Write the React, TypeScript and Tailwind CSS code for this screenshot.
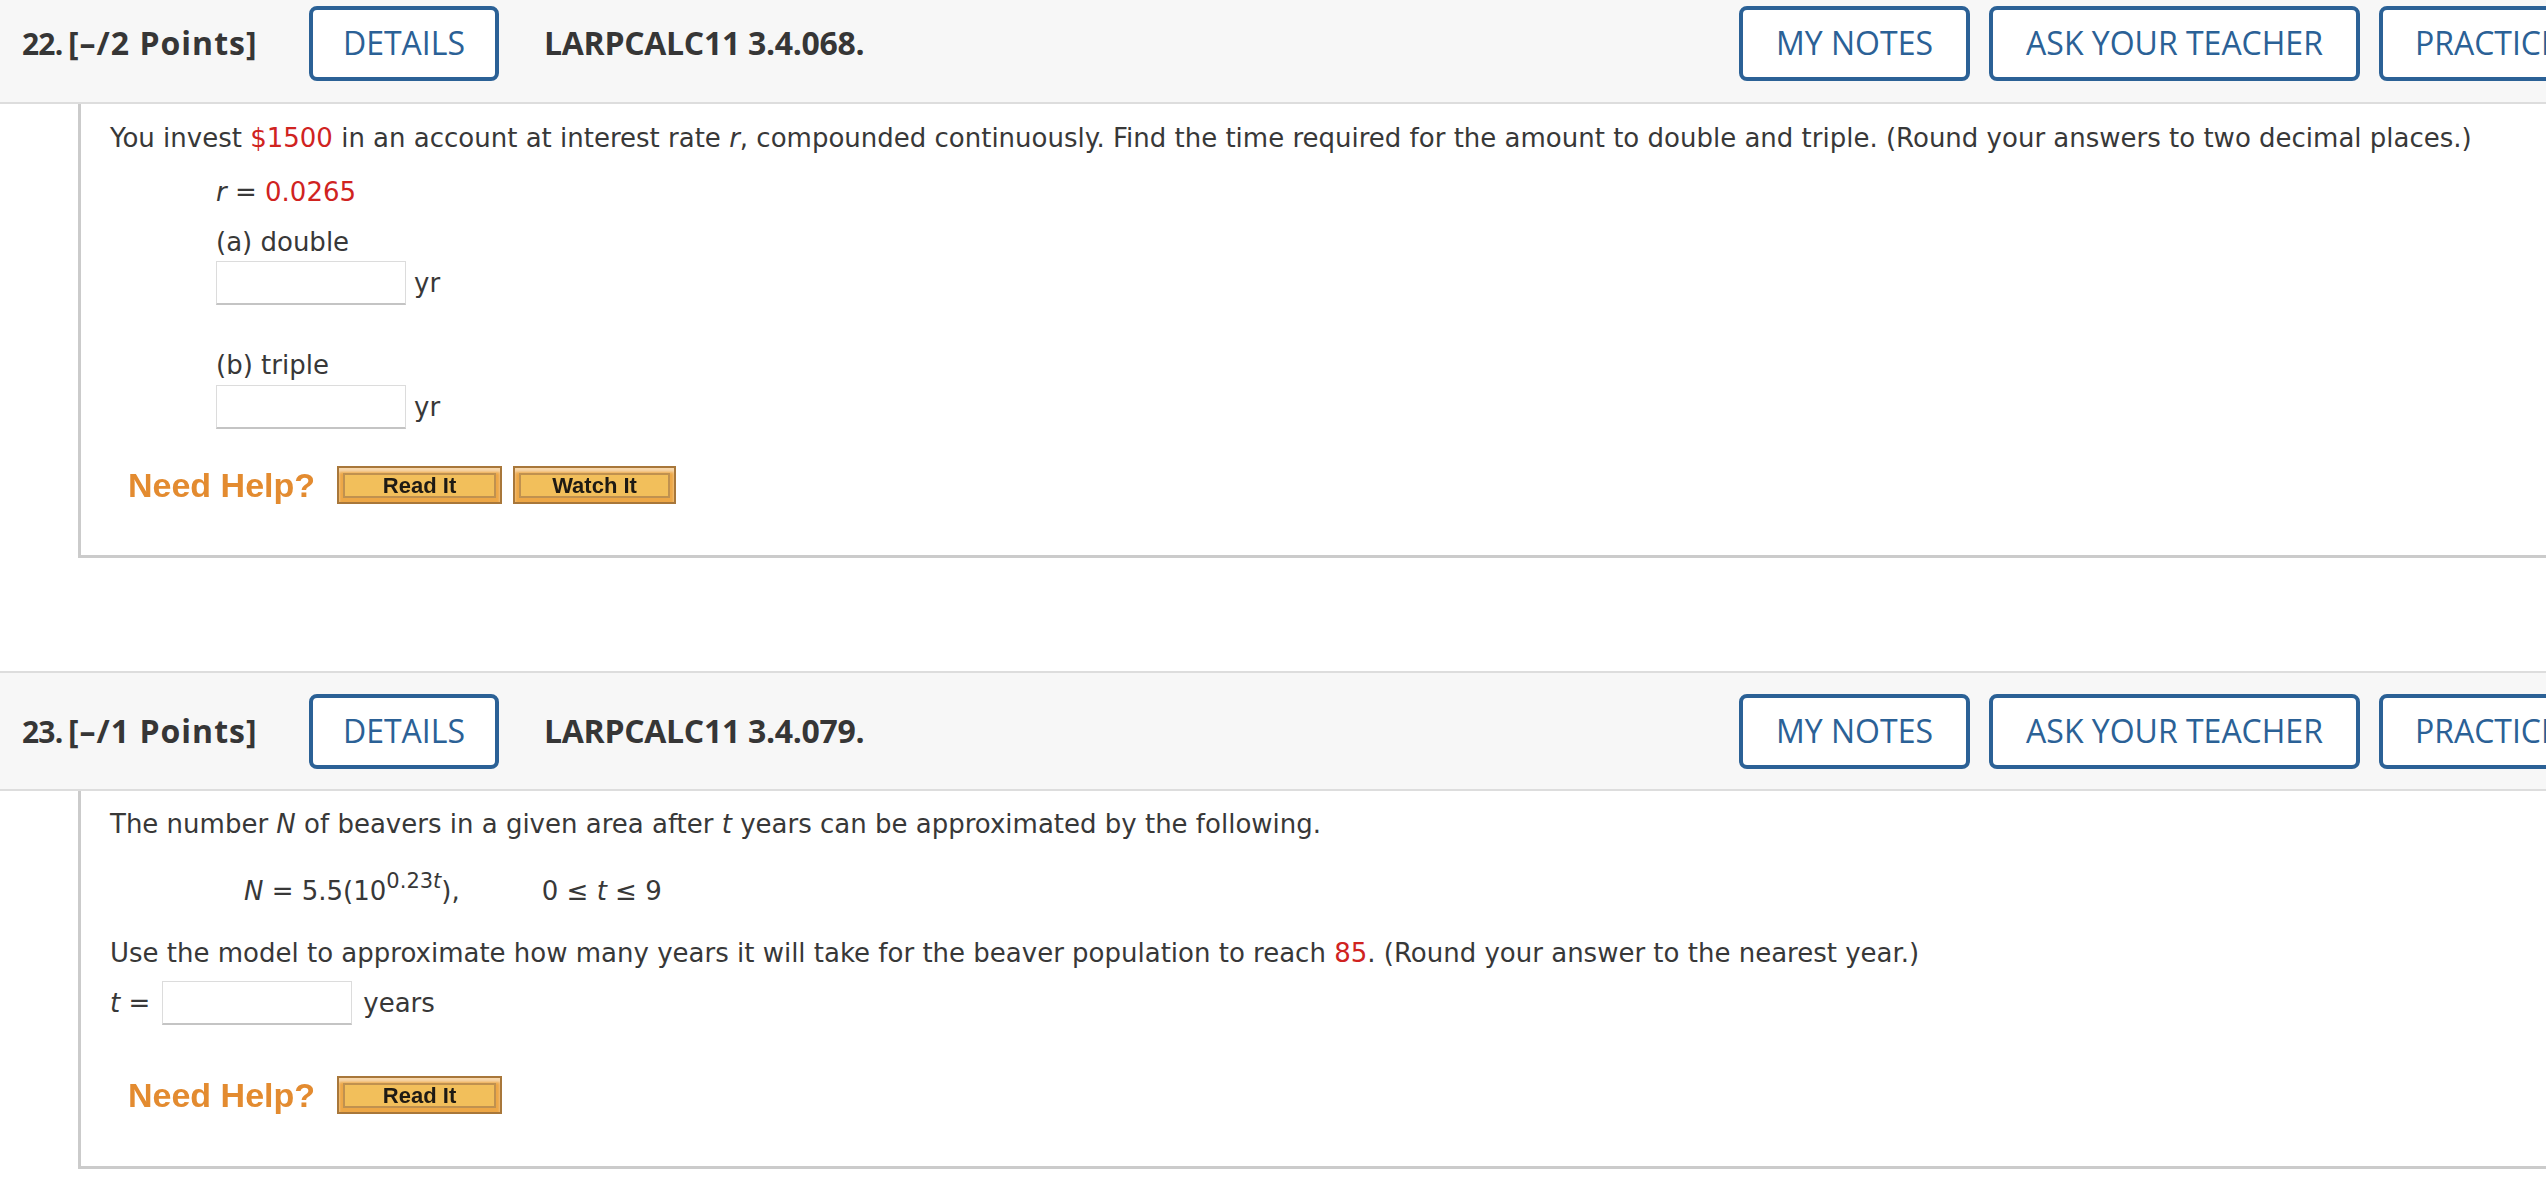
import React from "react";

const body = { fontFamily: '"DejaVu Sans", Verdana, sans-serif' };

function HeaderBtn({ label, w }: { label: string; w: string }) {
  return (
    <div
      className={`${w} h-[75px] shrink-0 border-[4px] border-[#2b6196] rounded-[8px] bg-white flex items-center justify-center text-[#2b6196] text-[32px] whitespace-nowrap overflow-hidden`}
    >
      {label}
    </div>
  );
}

function Header({ num, pts, code, top }: { num: string; pts: string; code: string; top?: boolean }) {
  return (
    <div
      className={`h-[120px] bg-[#f7f7f7] border-b-2 border-[#dddddd] ${top ? "" : "border-t-2"} flex items-center whitespace-nowrap text-[#363636]`}
      style={{ fontFamily: '"Open Sans", sans-serif' }}
    >
      <div className="w-[1739px] shrink-0 flex items-center">
        <span className="ml-[22px] w-[46px] font-bold text-[30px] tracking-[-0.8px]">{num}</span>
        <span className="w-[241px] font-bold text-[32px] tracking-[1px]">{pts}</span>
        <HeaderBtn label="DETAILS" w="w-[190px]" />
        <span className="ml-[45px] font-bold text-[32px] tracking-[-0.3px]">{code}</span>
      </div>
      <div className="flex gap-[19px]">
        <HeaderBtn label="MY NOTES" w="w-[231px]" />
        <HeaderBtn label="ASK YOUR TEACHER" w="w-[371px]" />
        <HeaderBtn label="PRACTICE ANOTHER" w="w-[372px]" />
      </div>
    </div>
  );
}

function HelpBtn({ label, w }: { label: string; w: string }) {
  return (
    <div className={`${w} h-[38px] border-2 border-[#a8773a] bg-[#eda746] p-[4px] pt-[5px] shadow-[inset_0_4px_3px_rgba(255,255,255,0.55)]`}>
      <div
        className="h-full border-2 border-[#c0914f] bg-[#f2bf5b] flex items-center justify-center text-[22px] font-bold text-[#1e1a14] blur-[0.5px]"
        style={{ fontFamily: '"Liberation Sans", Arial, sans-serif' }}
      >
        {label}
      </div>
    </div>
  );
}

function NeedHelp({ children }: { children: React.ReactNode }) {
  return (
    <div className="flex items-center ml-[47px]">
      <span
        className="text-[34px] font-bold text-[#e38b30] mr-[22px] blur-[0.6px]"
        style={{ fontFamily: '"Liberation Sans", Arial, sans-serif' }}
      >
        Need Help?
      </span>
      <div className="flex gap-[11px]">{children}</div>
    </div>
  );
}

function Input({ w }: { w: string }) {
  return <div className={`${w} h-[44px] bg-white border border-[#dcdcdc] border-b-2 border-b-[#c4c4c4]`} />;
}

const red = "text-[#d0231f]";

export default function App() {
  return (
    <div className="w-[2546px] h-[1184px] overflow-hidden bg-white">
      <div className="-mt-[16px] w-[3000px]">
        <Header num="22." pts="[–/2 Points]" code="LARPCALC11 3.4.068." top />
        <div
          className="ml-[78px] h-[454px] border-l-[3px] border-b-[3px] border-[#cbcbcb] text-[#383838] text-[26px] leading-none"
          style={body}
        >
          <div className="pl-[29px] pt-[21px]">
            You invest <span className={red}>$1500</span> in an account at interest rate <i>r</i>, compounded
            continuously. Find the time required for the amount to double and triple. (Round your answers to two
            decimal places.)
          </div>
          <div className="pl-[135px] pt-[28px]">
            <div>
              <i>r</i> = <span className={red}>0.0265</span>
            </div>
            <div className="pt-[24px]">(a) double</div>
            <div className="flex items-center gap-[8px] pt-[6px]">
              <Input w="w-[190px]" />
              <span>yr</span>
            </div>
            <div className="pt-[47px]">(b) triple</div>
            <div className="flex items-center gap-[8px] pt-[7px]">
              <Input w="w-[190px]" />
              <span>yr</span>
            </div>
          </div>
          <div className="pt-[37px]">
            <NeedHelp>
              <HelpBtn label="Read It" w="w-[165px]" />
              <HelpBtn label="Watch It" w="w-[163px]" />
            </NeedHelp>
          </div>
        </div>
        <div className="h-[113px]" />
        <Header num="23." pts="[–/1 Points]" code="LARPCALC11 3.4.079." />
        <div
          className="ml-[78px] h-[378px] border-l-[3px] border-b-[3px] border-[#cbcbcb] text-[#383838] text-[26px] leading-none"
          style={body}
        >
          <div className="pl-[29px] pt-[20px]">
            The number <i>N</i> of beavers in a given area after <i>t</i> years can be approximated by the following.
          </div>
          <div className="pl-[163px] pt-[41px] flex items-end">
            <span>
              <i>N</i> = 5.5(10<span className="text-[21px] relative -top-[12px]">0.23<i>t</i></span>),
            </span>
            <span className="ml-[82px]">
              0 ≤ <i>t</i> ≤ 9
            </span>
          </div>
          <div className="pl-[29px] pt-[36px]">
            Use the model to approximate how many years it will take for the beaver population to reach{" "}
            <span className={red}>85</span>. (Round your answer to the nearest year.)
          </div>
          <div className="pl-[29px] pt-[15px] flex items-center">
            <span>
              <i>t</i> =
            </span>
            <div className="ml-[12px]">
              <Input w="w-[190px]" />
            </div>
            <span className="ml-[11px]">years</span>
          </div>
          <div className="pt-[51px]">
            <NeedHelp>
              <HelpBtn label="Read It" w="w-[165px]" />
            </NeedHelp>
          </div>
        </div>
      </div>
    </div>
  );
}
